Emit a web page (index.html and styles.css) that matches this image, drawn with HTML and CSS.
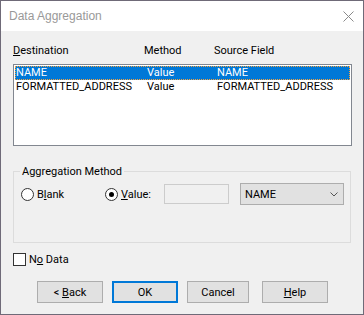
FILE: index.html
```html
<!DOCTYPE html>
<html lang="en">
<head>
  <meta charset="UTF-8">
  <title>Data Aggregation</title>
  <link rel="stylesheet" href="styles.css">
</head>
<body>
  <div class="window">
    <div class="titlebar">
      <span class="title">Data Aggregation</span>
      <svg class="close" width="11" height="11" viewBox="0 0 11 11"><path d="M0.5 0.5 L10.5 10.5 M10.5 0.5 L0.5 10.5" stroke="#8a8a8a" stroke-width="1" fill="none"/></svg>
    </div>
    <div class="content">
      <div class="cols head">
        <span class="c1"><u>D</u>estination</span>
        <span class="c2">Method</span>
        <span class="c3">Source Field</span>
      </div>
      <div class="listbox">
        <div class="cols row sel">
          <span class="c1">NAME</span>
          <span class="c2">Value</span>
          <span class="c3">NAME</span>
        </div>
        <div class="cols row">
          <span class="c1">FORMATTED_ADDRESS</span>
          <span class="c2">Value</span>
          <span class="c3">FORMATTED_ADDRESS</span>
        </div>
      </div>

      <fieldset class="group">
        <legend>Aggregation Method</legend>
        <div class="opts">
          <div class="opt opt-blank"><span class="radio"></span><span>B<u>l</u>ank</span></div>
          <div class="opt opt-value"><span class="radio on"></span><span><u>V</u>alue:</span></div>
          <div class="textbox"></div>
          <div class="combo"><span>NAME</span>
            <svg width="8" height="5" viewBox="0 0 8 5"><path d="M0.5 0.5 L4 4 L7.5 0.5" stroke="#555" fill="none"/></svg>
          </div>
        </div>
      </fieldset>

      <div class="check"><span class="box"></span><span>N<u>o</u> Data</span></div>

      <div class="buttons">
        <div class="btn"><span>&lt; <u>B</u>ack</span></div>
        <div class="btn btn-ok">OK</div>
        <div class="btn btn-cancel">Cancel</div>
        <div class="btn btn-help"><span><u>H</u>elp</span></div>
      </div>
    </div>
  </div>
</body>
</html>
```

FILE: styles.css
```css
* { box-sizing: border-box; }
body { margin: 0; background: #f0f0f0; font-family: Roboto, "Liberation Sans", sans-serif; font-size: 11px; color: #000; }
u { text-decoration: underline; text-underline-offset: 1px; }

.window { width: 364px; height: 315px; border: 1px solid #6f6a78; background: #f0f0f0; display: flex; flex-direction: column; }
.titlebar { height: 30px; flex: none; background: #fff; display: flex; align-items: center; justify-content: space-between; padding: 0 9px 0 8px; }
.title { font-family: "Liberation Sans", Arial, sans-serif; font-size: 12px; color: #999; }
.close { display: block; }

.content { padding: 12px 0 0 12px; }
.cols { display: flex; line-height: 15px; white-space: nowrap; }
.c1 { width: 131px; }
.c2 { width: 70px; }

.listbox { margin-top: 6px; width: 339px; height: 82px; border: 1px solid #828790; background: #fff; padding: 1px; }
.row { height: 14px; line-height: 14px; padding-left: 1px; }
.row.sel { background: #0078d7; color: #fff; outline: 1px dotted #f7a23c; outline-offset: -1px; }

.group { margin: 18px 0 0; padding: 0; width: 338px; border: 1px solid #dcdcdc; min-width: 0; }
.group legend { margin-left: 6px; padding: 0 2px; line-height: 15px; }
.opts { display: flex; align-items: center; height: 22px; margin: 4px 0 37px; padding-left: 7px; }
.opt { display: flex; align-items: center; line-height: 15px; }
.opt-blank { width: 84px; }
.opt-value { width: 59px; }
.radio { width: 13px; height: 13px; border: 1px solid #333; border-radius: 50%; background: #fff; margin-right: 3px; display: flex; align-items: center; justify-content: center; }
.radio.on::after { content: ""; width: 5px; height: 5px; border-radius: 50%; background: #000; }
.textbox { width: 65px; height: 20px; border: 1px solid #cccccc; background: #f0f0f0; margin-right: 11px; }
.combo { width: 104px; height: 22px; border: 1px solid #adadad; background: #e1e1e1; display: flex; align-items: center; justify-content: space-between; padding: 0 5px 0 4px; }

.check { display: flex; align-items: center; height: 14px; margin-top: 9px; line-height: 15px; }
.box { width: 13px; height: 13px; border: 1px solid #333; background: #fff; margin-right: 3px; }

.buttons { display: flex; gap: 9px; margin: 15px 0 0 24px; }
.btn { width: 66px; height: 22px; border: 1px solid #adadad; background: #e1e1e1; display: flex; align-items: center; justify-content: center; }
.btn-ok { border: 2px solid #0078d7; }
.btn-cancel { width: 62px; }
.btn-help { margin-left: 4px; }
```
